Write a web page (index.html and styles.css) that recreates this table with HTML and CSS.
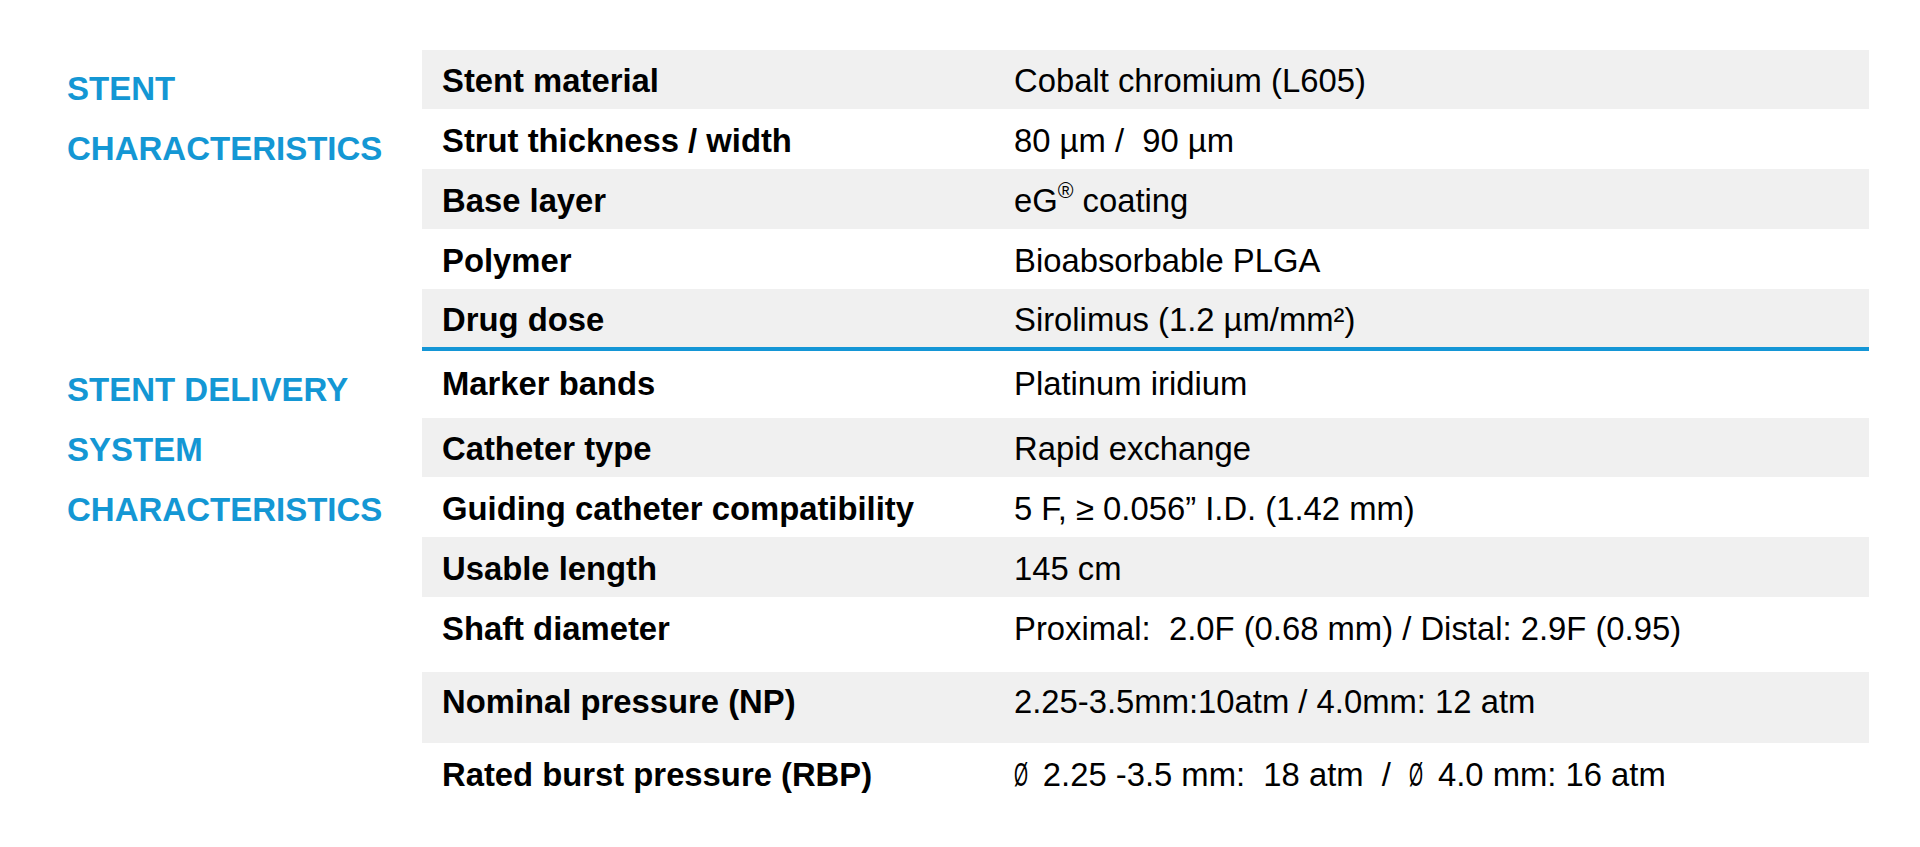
FILE: index.html
```html
<!DOCTYPE html>
<html lang="en">
<head>
<meta charset="utf-8">
<title>Stent specifications</title>
<link rel="stylesheet" href="styles.css">
</head>
<body>
<main class="spec">
  <section class="group">
    <h2 class="group-title">STENT<br>CHARACTERISTICS</h2>
    <div class="table table--first">
      <div class="row row--gray row--h59"><span class="label">Stent material</span><span class="value">Cobalt chromium (L605)</span></div>
      <div class="row"><span class="label">Strut thickness / width</span><span class="value">80 µm /  90 µm</span></div>
      <div class="row row--gray"><span class="label">Base layer</span><span class="value">eG<sup class="reg">®</sup> coating</span></div>
      <div class="row"><span class="label">Polymer</span><span class="value">Bioabsorbable PLGA</span></div>
      <div class="row row--gray row--h58"><span class="label">Drug dose</span><span class="value">Sirolimus (1.2 µm/mm²)</span></div>
    </div>
  </section>
  <section class="group">
    <h2 class="group-title">STENT DELIVERY<br>SYSTEM<br>CHARACTERISTICS</h2>
    <div class="table">
      <div class="row row--h67"><span class="label">Marker bands</span><span class="value">Platinum iridium</span></div>
      <div class="row row--gray row--h59"><span class="label">Catheter type</span><span class="value">Rapid exchange</span></div>
      <div class="row"><span class="label">Guiding catheter compatibility</span><span class="value">5 F, ≥ 0.056” I.D. (1.42 mm)</span></div>
      <div class="row row--gray"><span class="label">Usable length</span><span class="value">145 cm</span></div>
      <div class="row row--h75"><span class="label">Shaft diameter</span><span class="value">Proximal:  2.0F (0.68 mm) / Distal: 2.9F (0.95)</span></div>
      <div class="row row--gray row--h71"><span class="label">Nominal pressure (NP)</span><span class="value">2.25-3.5mm:10atm / 4.0mm: 12 atm</span></div>
      <div class="row row--h62"><span class="label">Rated burst pressure (RBP)</span><span class="value"><span class="dia">Ø</span> 2.25 -3.5 mm:  18 atm  /  <span class="dia">Ø</span> 4.0 mm: 16 atm</span></div>
    </div>
  </section>
</main>
</body>
</html>
```
FILE: styles.css
```css
html, body {
  margin: 0;
  padding: 0;
  background: #ffffff;
}

body {
  font-family: "Liberation Sans", Arial, sans-serif;
  font-size: 32.8px;
  color: #000000;
}

.spec {
  padding: 50px 51px 0 67px;
}

.group {
  display: grid;
  grid-template-columns: 355px 1447px;
}

.group-title {
  margin: 0;
  padding-top: 9px;
  font-size: 33px;
  font-weight: 700;
  line-height: 60px;
  color: #1497d4;
  letter-spacing: 0;
}

.table--first {
  border-bottom: 4px solid #1496d6;
}

.row {
  display: grid;
  grid-template-columns: 592px 1fr;
  height: 60px;
  box-sizing: border-box;
  padding-top: 14px;
  line-height: 36px;
}

.row--gray {
  background: #f0f0f0;
}

.row--h59 { height: 59px; padding-top: 13px; }
.row--h58 { height: 58px; padding-top: 13px; }
.row--h67 { height: 67px; padding-top: 15px; }
.row--h75 { height: 75px; padding-top: 14px; }
.row--h71 { height: 71px; padding-top: 12px; }
.row--h62 { height: 62px; padding-top: 14px; }

.label {
  padding-left: 20px;
  font-weight: 700;
  white-space: nowrap;
}

.value {
  font-weight: 400;
  white-space: pre;
}

.reg {
  font-size: 0.65em;
  line-height: 0;
  vertical-align: 0.65em;
}

.dia {
  display: inline-block;
  width: 0.6em;
  overflow: visible;
  transform: scaleX(0.55);
  transform-origin: 0 50%;
}
```
